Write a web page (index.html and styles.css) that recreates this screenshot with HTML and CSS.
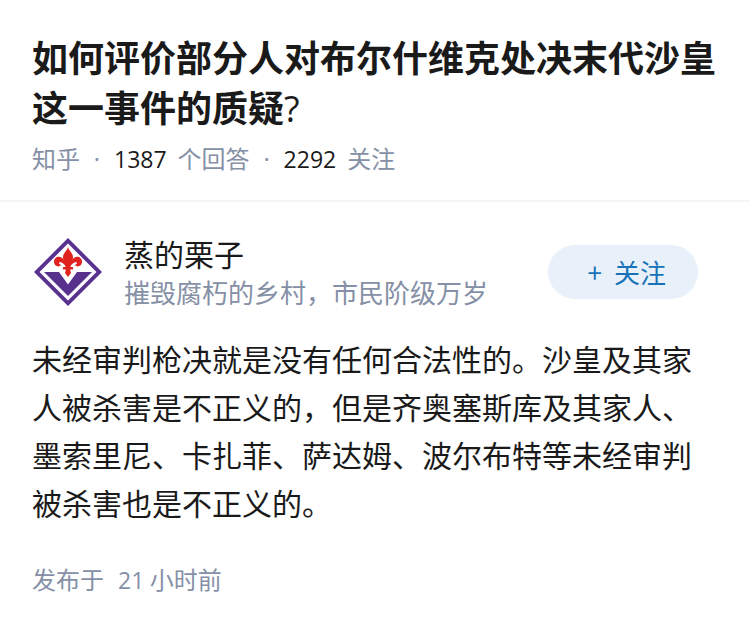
FILE: index.html
```html
<!DOCTYPE html>
<html lang="zh-CN">
<head>
    <meta charset="UTF-8">
    <meta name="viewport" content="width=device-width, initial-scale=1.0">
    <title>知乎</title>
    <link rel="stylesheet" href="styles.css">
</head>
<body>
    <header class="question">
        <h1 class="title">如何评价部分人对布尔什维克处决末代沙皇这一事件的质疑<span class="mark">?</span></h1>
        <div class="meta">
            <span>知乎</span>
            <span class="dot">·</span>
            <span class="number">1387</span>
            <span>个回答</span>
            <span class="dot">·</span>
            <span class="number">2292</span>
            <span>关注</span>
        </div>
    </header>
    <article class="answer">
        <div class="author">
            <svg class="avatar" viewBox="0 0 72 72" aria-hidden="true">
                <path d="M36 2 L70 36 L36 70 L2 36 Z" fill="#58318f"/>
                <path d="M36 7.5 L64.5 36 L36 64.5 L7.500 36 Z" fill="#fff"/>
                <path d="M12 36 H27 L36 48.500 L45 36 H60 L36 60 Z" fill="#58318f"/>
                <path d="M32 36 H40 L36 43 Z" fill="#fff"/>
                <g fill="#df2420">
                    <path d="M36 11 C37 15 41 17 41 21 C41 25 38 27 38 34 H34 C34 27 31 25 31 21 C31 17 35 15 36 11 Z"/>
                    <path d="M34.500 32 C33 29 31 26.500 28 26 C26.500 27 27 28 29 29 C27 32 22 30 22 26 C22 21.500 26 19.500 29.500 21.500 C33 24 35 27 35.500 32 Z"/>
                    <path d="M37.500 32 C39 29 41 26.500 44 26 C45.500 27 45 28 43 29 C45 32 50 30 50 26 C50 21.500 46 19.500 42.500 21.500 C39 24 37 27 36.500 32 Z"/>
                    <path d="M31 31 H41 V33.500 H31 Z"/>
                    <path d="M34 33 H38 L39 37 L36 41 L33 37 Z"/>
                </g>
            </svg>
            <div class="info">
                <div class="name">蒸的栗子</div>
                <div class="bio">摧毁腐朽的乡村，市民阶级万岁</div>
            </div>
            <button class="follow" type="button"><span>+</span><span>关注</span></button>
        </div>
        <p class="content">未经审判枪决就是没有任何合法性的。沙皇及其家人被杀害是不正义的，但是齐奥塞斯库及其家人、墨索里尼、卡扎菲、萨达姆、波尔布特等未经审判被杀害也是不正义的。</p>
        <div class="time"><span>发布于</span><span><span class="digits">21</span> 小时前</span></div>
    </article>
</body>
</html>
```
FILE: styles.css
```css
body {
    margin: 0;
    background-color: #fff;
    color: #1a1a1a;
    font-family: "Noto Sans CJK SC", sans-serif;
}
.question {
    padding: 31px 32px 25px;
    border-bottom: 2px solid #f5f5f6;
}
.title {
    margin: 0 0 10px;
    font-size: 36px;
    line-height: 50px;
    font-weight: bold;
}
.mark {
    font-family: "Open Sans", sans-serif;
    font-weight: normal;
    line-height: 1;
}
.meta {
    display: flex;
    align-items: baseline;
    gap: 11px;
    font-size: 24px;
    line-height: 34px;
    color: #8590a6;
}
.dot {
    width: 12px;
    font-family: "Open Sans", sans-serif;
    line-height: 1;
    text-align: center;
}
.number {
    font-family: "Open Sans", sans-serif;
    font-size: 23px;
    line-height: 1;
    color: #1a1a1a;
}
.answer {
    padding: 31px 32px;
}
.author {
    display: flex;
    align-items: center;
}
.avatar {
    width: 72px;
    height: 72px;
    flex-shrink: 0;
}
.info {
    flex: 1;
    margin-left: 20px;
}
.name {
    font-size: 30px;
    line-height: 40px;
}
.bio {
    font-size: 26px;
    line-height: 38px;
    color: #8590a6;
}
.follow {
    display: flex;
    align-items: center;
    gap: 12px;
    margin-right: 20px;
    padding: 8px 32px 8px 40px;
    border: none;
    border-radius: 27px;
    background-color: #e8f1fa;
    color: #1772b8;
    font-family: inherit;
    font-size: 26px;
    line-height: 38px;
    cursor: pointer;
}
.content {
    margin: 23px 0 36px;
    font-size: 30px;
    line-height: 48px;
}
.time {
    display: flex;
    align-items: baseline;
    gap: 14px;
    font-size: 24px;
    line-height: 34px;
    color: #8590a6;
}
.digits {
    font-family: "Open Sans", sans-serif;
    font-size: 23px;
    line-height: 1;
}
```
